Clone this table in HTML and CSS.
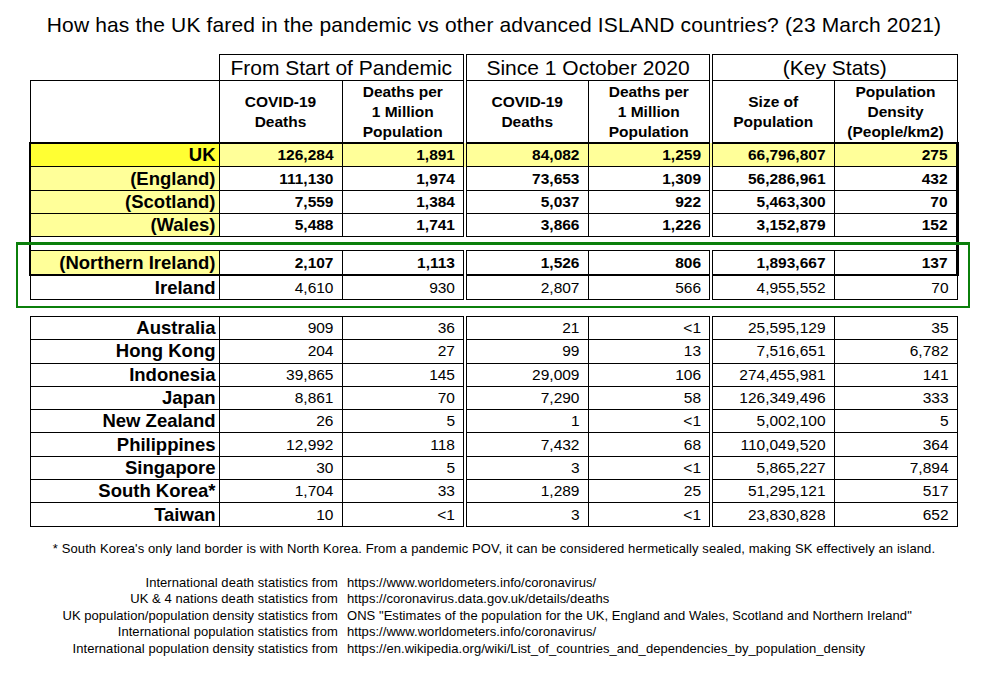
FILE: index.html
```html
<!DOCTYPE html>
<html lang="en">
<head>
<meta charset="utf-8">
<title>UK vs island countries</title>
<link rel="stylesheet" href="styles.css">
</head>
<body>
<div class="page">
  <h1 class="title">How has the UK fared in the pandemic vs other advanced ISLAND countries? (23 March 2021)</h1>
  <div class="table-wrap">
    <table class="stats">
      <colgroup>
        <col class="c-lab"><col class="c-num"><col class="c-num"><col class="c-num"><col class="c-num"><col class="c-num"><col class="c-num">
      </colgroup>
      <thead>
        <tr class="group-row">
          <th class="blank"></th>
          <th colspan="2" class="grp dbl">From Start of Pandemic</th>
          <th colspan="2" class="grp dbl">Since 1 October 2020</th>
          <th colspan="2" class="grp">(Key Stats)</th>
        </tr>
        <tr class="head-row">
          <th class="lab-head"></th>
          <th>COVID-19<br>Deaths</th>
          <th class="dbl">Deaths per<br>1 Million<br>Population</th>
          <th>COVID-19<br>Deaths</th>
          <th class="dbl">Deaths per<br>1 Million<br>Population</th>
          <th>Size of<br>Population</th>
          <th>Population<br>Density<br>(People/km2)</th>
        </tr>
      </thead>
      <tbody class="uk-block">
        <tr class="row first hi">
          <th class="lab bright">UK</th>
          <td>126,284</td><td class="dbl">1,891</td><td>84,082</td><td class="dbl">1,259</td><td>66,796,807</td><td class="last">275</td>
        </tr>
        <tr class="row tall bold">
          <th class="lab pale">(England)</th>
          <td>111,130</td><td class="dbl">1,974</td><td>73,653</td><td class="dbl">1,309</td><td>56,286,961</td><td class="last">432</td>
        </tr>
        <tr class="row bold">
          <th class="lab pale">(Scotland)</th>
          <td>7,559</td><td class="dbl">1,384</td><td>5,037</td><td class="dbl">922</td><td>5,463,300</td><td class="last">70</td>
        </tr>
        <tr class="row bold">
          <th class="lab pale">(Wales)</th>
          <td>5,488</td><td class="dbl">1,741</td><td>3,866</td><td class="dbl">1,226</td><td>3,152,879</td><td class="last">152</td>
        </tr>
        <tr class="gap-row">
          <td colspan="7" class="gap-cell"></td>
        </tr>
        <tr class="row tall bold ni">
          <th class="lab pale">(Northern Ireland)</th>
          <td>2,107</td><td class="dbl">1,113</td><td>1,526</td><td class="dbl">806</td><td>1,893,667</td><td class="last">137</td>
        </tr>
      </tbody>
      <tbody>
        <tr class="row tall">
          <th class="lab">Ireland</th>
          <td>4,610</td><td class="dbl">930</td><td>2,807</td><td class="dbl">566</td><td>4,955,552</td><td>70</td>
        </tr>
        <tr class="spacer-row">
          <td colspan="7" class="spacer"></td>
        </tr>
        <tr class="row intl">
          <th class="lab">Australia</th>
          <td>909</td><td class="dbl">36</td><td>21</td><td class="dbl">&lt;1</td><td>25,595,129</td><td>35</td>
        </tr>
        <tr class="row intl">
          <th class="lab">Hong Kong</th>
          <td>204</td><td class="dbl">27</td><td>99</td><td class="dbl">13</td><td>7,516,651</td><td>6,782</td>
        </tr>
        <tr class="row intl">
          <th class="lab">Indonesia</th>
          <td>39,865</td><td class="dbl">145</td><td>29,009</td><td class="dbl">106</td><td>274,455,981</td><td>141</td>
        </tr>
        <tr class="row intl">
          <th class="lab">Japan</th>
          <td>8,861</td><td class="dbl">70</td><td>7,290</td><td class="dbl">58</td><td>126,349,496</td><td>333</td>
        </tr>
        <tr class="row intl">
          <th class="lab">New Zealand</th>
          <td>26</td><td class="dbl">5</td><td>1</td><td class="dbl">&lt;1</td><td>5,002,100</td><td>5</td>
        </tr>
        <tr class="row intl">
          <th class="lab">Philippines</th>
          <td>12,992</td><td class="dbl">118</td><td>7,432</td><td class="dbl">68</td><td>110,049,520</td><td>364</td>
        </tr>
        <tr class="row intl">
          <th class="lab">Singapore</th>
          <td>30</td><td class="dbl">5</td><td>3</td><td class="dbl">&lt;1</td><td>5,865,227</td><td>7,894</td>
        </tr>
        <tr class="row intl">
          <th class="lab">South Korea*</th>
          <td>1,704</td><td class="dbl">33</td><td>1,289</td><td class="dbl">25</td><td>51,295,121</td><td>517</td>
        </tr>
        <tr class="row intl">
          <th class="lab">Taiwan</th>
          <td>10</td><td class="dbl">&lt;1</td><td>3</td><td class="dbl">&lt;1</td><td>23,830,828</td><td>652</td>
        </tr>
      </tbody>
    </table>
    <div class="green-box"></div>
  </div>
  <p class="footnote">* South Korea's only land border is with North Korea. From a pandemic POV, it can be considered hermetically sealed, making SK effectively an island.</p>
  <div class="sources">
    <span class="src-label">International death statistics from</span><span class="src-val">https://www.worldometers.info/coronavirus/</span>
    <span class="src-label">UK &amp; 4 nations death statistics from</span><span class="src-val">https://coronavirus.data.gov.uk/details/deaths</span>
    <span class="src-label">UK population/population density statistics from</span><span class="src-val">ONS "Estimates of the population for the UK, England and Wales, Scotland and Northern Ireland"</span>
    <span class="src-label">International population statistics from</span><span class="src-val">https://www.worldometers.info/coronavirus/</span>
    <span class="src-label">International population density statistics from</span><span class="src-val">https://en.wikipedia.org/wiki/List_of_countries_and_dependencies_by_population_density</span>
  </div>
</div>
</body>
</html>
```
FILE: styles.css
```css
html, body {
  margin: 0;
  padding: 0;
  background: #ffffff;
}

body {
  font-family: "Liberation Sans", Arial, sans-serif;
  color: #000;
}

.page {
  width: 988px;
  height: 674px;
  overflow: hidden;
}

.title {
  margin: 0;
  padding-top: 13px;
  font-size: 21px;
  line-height: 24px;
  font-weight: normal;
  text-align: center;
  letter-spacing: 0.15px;
}

.table-wrap {
  position: relative;
  margin-top: 17px;
}

.stats {
  border-collapse: collapse;
  table-layout: fixed;
  width: 929px;
  margin-left: 29px;
}

.c-lab { width: 189px; }
.c-num { width: 123px; }

.stats th,
.stats td {
  border: 1px solid #000;
  padding: 0 8px 0 0;
  text-align: right;
  vertical-align: middle;
  white-space: nowrap;
  font-size: 15.5px;
  line-height: 20px;
}

.stats .dbl {
  border-right: 4px double #000;
}

.group-row th {
  height: 25px;
}

.stats .blank {
  border: none;
}

.stats .grp {
  text-align: center;
  font-weight: normal;
  font-size: 21px;
  padding: 0;
}

.head-row th {
  height: 61px;
  text-align: center;
  font-weight: bold;
  padding: 0;
  font-size: 15.5px;
  line-height: 20px;
}

.row th,
.row td {
  height: 22px;
}

.row.tall th,
.row.tall td {
  height: 23px;
}

.row.intl th,
.row.intl td {
  height: 22.3px;
}

.stats .lab {
  font-size: 18.5px;
  font-weight: bold;
  padding-right: 3px;
}

.bold td {
  font-weight: bold;
}

.hi td {
  font-weight: bold;
  background: #ffff99;
}

.lab.bright {
  background: #ffff33;
}

.lab.pale {
  background: #ffff99;
}

/* thick outline of the UK block */
.uk-block .row.first th,
.uk-block .row.first td {
  border-top: 2px solid #000;
}

.uk-block .lab,
.uk-block .gap-cell {
  border-left: 2px solid #000;
}

.uk-block .last,
.uk-block .gap-cell {
  border-right: 3px solid #000;
}

.uk-block .ni th,
.uk-block .ni td {
  border-bottom: 2px solid #000;
}

.gap-cell {
  height: 13px;
  padding: 0;
}

.stats .spacer {
  height: 16px;
  border-left: none;
  border-right: none;
  padding: 0;
}

.green-box {
  position: absolute;
  left: 16px;
  top: 188px;
  width: 950px;
  height: 61px;
  border: 2px solid #0b7f0b;
  border-top-width: 3px;
}

.footnote {
  margin: 14px 0 0 0;
  text-align: center;
  font-size: 13px;
  line-height: 16px;
  letter-spacing: 0.1px;
}

.sources {
  display: grid;
  grid-template-columns: 338px auto;
  column-gap: 9px;
  margin-top: 18px;
  font-size: 13px;
  line-height: 16.6px;
  letter-spacing: 0.05px;
}

.src-label {
  text-align: right;
}

.src-val {
  text-align: left;
}
```
